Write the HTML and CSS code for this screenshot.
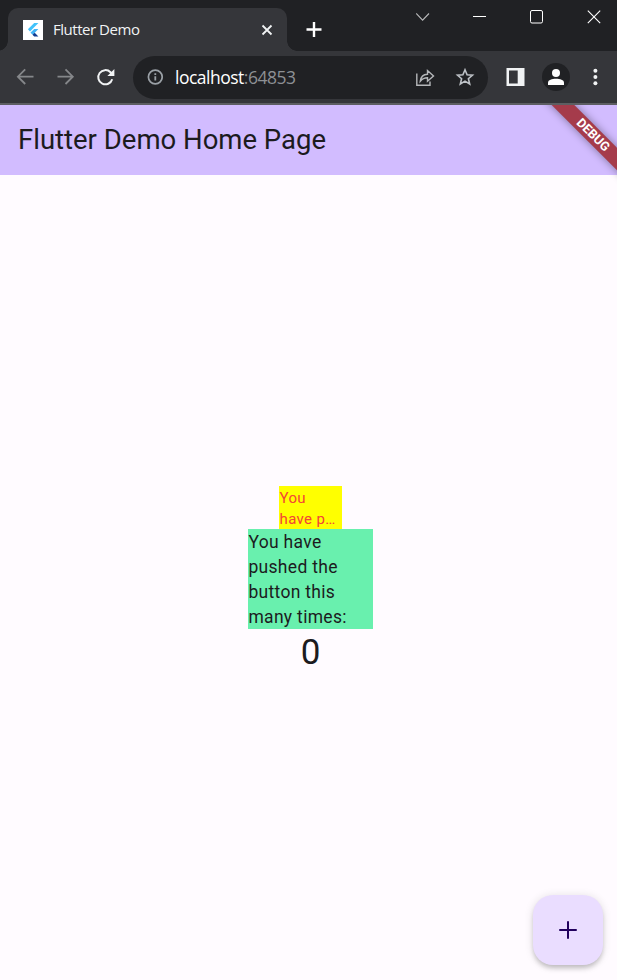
FILE: index.html
```html
<!DOCTYPE html>
<html lang="en">
<head>
<meta charset="utf-8">
<title>Flutter Demo</title>
<link rel="stylesheet" href="styles.css">
</head>
<body>
<div class="window">
  <header class="tabstrip">
    <div class="tab">
      <span class="favicon"><svg width="20" height="20" viewBox="0 0 20 20"><path d="M11.2 3h4.2L7 11.4 4.9 9.2z" fill="#42c3fb"/><path d="M11.2 9h4.2l-5.6 5.8-2.4-2z" fill="#42b4f5"/><path d="M9.5 14.8l2.2-2.1 3.7 3.8h-4.2z" fill="#123c91"/></svg></span>
      <span class="tab-title">Flutter Demo</span>
      <svg class="tab-close" width="12" height="12" viewBox="0 0 12 12"><path d="M1.5 1.5l9 9M10.5 1.5l-9 9" stroke="#f1f3f4" stroke-width="1.8"/></svg>
    </div>
    <svg class="new-tab" width="16" height="16" viewBox="0 0 16 16"><path d="M8 1v15M.5 8.5h15" stroke="#fff" stroke-width="2.4"/></svg>
    <div class="controls">
      <svg width="14" height="14" viewBox="0 0 14 14"><path d="M.2 3.5l6.4 6.7L13 3.5" fill="none" stroke="#b8b9ba" stroke-width="1.1"/></svg>
      <svg width="14" height="14" viewBox="0 0 14 14"><path d="M0 6.5h13" stroke="#fff"/></svg>
      <svg width="14" height="14" viewBox="0 0 14 14"><rect x=".5" y=".5" width="12" height="12.5" rx="1.5" fill="none" stroke="#fff"/></svg>
      <svg width="14" height="14" viewBox="0 0 14 14"><path d="M.8.7l12.4 12.4M13.2.7L.8 13.1" stroke="#fff" stroke-width="1.1"/></svg>
    </div>
  </header>
  <nav class="toolbar">
    <svg class="nav" width="20" height="20" viewBox="0 0 20 20"><path d="M18.5 9.7H3.2M10.2 2.4L2.9 9.7l7.3 7.3" fill="none" stroke="#85878a" stroke-width="1.8"/></svg>
    <svg class="nav" width="20" height="20" viewBox="0 0 20 20"><path d="M2.5 9.7h15M10.5 2.4l7.3 7.3-7.3 7.3" fill="none" stroke="#85878a" stroke-width="1.8"/></svg>
    <svg class="nav" width="20" height="20" viewBox="0 0 20 20"><path d="M17.2 12.2A7.1 7.1 0 1 1 15.5 5.3l1.5 1.5" fill="none" stroke="#f1f3f4" stroke-width="2"/><path d="M19.4 2v7h-7z" fill="#f1f3f4"/></svg>
    <div class="address">
      <svg width="16" height="16" viewBox="0 0 16 16"><circle cx="8.3" cy="8" r="6.9" fill="none" stroke="#9aa0a6" stroke-width="1.7"/><path d="M8.3 7.2v4.4M8.3 4.2v1.7" stroke="#9aa0a6" stroke-width="1.8"/></svg>
      <span class="url">localhost<span class="port">:64853</span></span>
      <svg class="share" width="20" height="20" viewBox="0 0 20 20"><path d="M1.8 6.5v11.7H15v-3.6M5.3 14.2c.5-4.5 3.2-6.7 7.2-6.9V3.6L18.5 9l-6 5.2v-3.5c-3 0-5.2.9-7.2 3.5z" fill="none" stroke="#b5b7ba" stroke-width="1.4"/></svg>
      <svg class="star" width="20" height="20" viewBox="0 0 20 20"><path d="M10 2.7l2.1 5 5.4.5-4.1 3.5 1.3 5.3-4.7-2.9L5.3 17l1.3-5.3-4.1-3.5 5.4-.5z" fill="none" stroke="#bdc1c6" stroke-width="1.6"/></svg>
    </div>
    <svg class="panel" width="19" height="18" viewBox="0 0 19 18"><path fill-rule="evenodd" d="M.5 0h18v18H.5zM3 2.6v12.8h8.7V2.6z" fill="#f1f3f4"/></svg>
    <span class="avatar"><svg width="16" height="16" viewBox="0 0 16 16"><circle cx="8" cy="4" r="4" fill="#fff"/><path d="M0 16v-2.4C0 10.8 4 9.7 8 9.7s8 1.1 8 3.9V16z" fill="#fff"/></svg></span>
    <svg class="menu" width="6" height="18" viewBox="0 0 6 18"><g fill="#f1f3f4"><circle cx="3.4" cy="2.7" r="2"/><circle cx="3.4" cy="9" r="2"/><circle cx="3.4" cy="15.3" r="2"/></g></svg>
  </nav>
  <div class="app">
    <div class="appbar"><h1>Flutter Demo Home Page</h1></div>
    <div class="banner">DEBUG</div>
    <main class="content">
      <p class="small">You<br>have p…</p>
      <p class="message">You have pushed the button this many times:</p>
      <p class="count">0</p>
    </main>
    <button class="fab" aria-label="Increment"><svg width="30" height="30" viewBox="0 0 24 24"><path d="M19 12.8h-6.2V19h-1.6v-6.2H5v-1.6h6.2V5h1.6v6.2H19z" fill="#21005d"/></svg></button>
  </div>
</div>
</body>
</html>
```
FILE: styles.css
```css
* { box-sizing: border-box; }
html, body { height: 100%; }
body { margin: 0; background: #fffbff; }
h1, p { margin: 0; }
svg { display: block; flex: none; }
.window { width: 617px; height: 980px; overflow: hidden; display: flex; flex-direction: column; font-family: "Open Sans", sans-serif; }
.tabstrip { height: 51px; flex: none; display: flex; background: #202124; padding-left: 8px; }
.tab { position: relative; width: 279px; height: 43px; margin-top: 8px; border-radius: 10px 10px 0 0; background: #35363a; display: flex; align-items: center; padding: 0 14px 0 15px; }
.tab::before, .tab::after { content: ""; position: absolute; bottom: 0; width: 10px; height: 10px; }
.tab::before { left: -10px; background: radial-gradient(circle at 0 0, transparent 9.5px, #35363a 10px); }
.tab::after { right: -10px; background: radial-gradient(circle at 100% 0, transparent 9.5px, #35363a 10px); }
.favicon { width: 20px; height: 20px; background: #fff; }
.tab-title { margin: -2px 0 0 10px; font-size: 15px; line-height: 20px; letter-spacing: -0.47px; color: #f1f3f4; white-space: nowrap; }
.tab-close { margin-left: auto; }
.new-tab { margin: 21px 0 0 19px; }
.controls { display: flex; gap: 43px; margin: 10px 0 0 94px; }
.toolbar { height: 54px; flex: none; display: flex; align-items: center; background: #35363a; border-bottom: 2px solid #5d5e62; padding-left: 15px; }
.nav { margin-right: 20px; }
.nav + .nav + .nav { margin-right: 18px; }
.address { width: 355px; height: 43px; border-radius: 22px; background: #202124; display: flex; align-items: center; padding-left: 14px; }
.url { margin-left: 12px; font-size: 17.5px; line-height: 24px; letter-spacing: -0.5px; color: #fff; white-space: nowrap; }
.port { color: #8d9094; }
.share { margin-left: auto; }
.star { margin: 0 13px 0 20px; }
.panel { margin-left: 18px; }
.avatar { width: 28px; height: 28px; margin-left: 17px; border-radius: 50%; background: #202124; display: flex; align-items: center; justify-content: center; }
.menu { margin-left: 22px; }
.app { position: relative; flex: 1; width: 621px; display: flex; flex-direction: column; overflow: hidden; font-family: Roboto, sans-serif; color: #1c1b1e; background: #fffbff; }
.appbar { height: 70px; flex: none; display: flex; align-items: center; padding: 0 0 2px 18px; background: #d2bcff; }
h1 { font-size: 27.5px; font-weight: 400; line-height: 35px; white-space: nowrap; }
.banner { position: absolute; left: 528px; top: 22px; width: 130px; height: 16px; transform: rotate(45deg); background: #a53b4b; box-shadow: 0 0 8px rgba(0,0,0,.4); color: #fff; font-size: 12.75px; font-weight: 700; line-height: 16px; text-align: center; }
.content { flex: 1; display: flex; flex-direction: column; align-items: center; padding-top: 311px; }
.small { width: 63px; height: 43px; padding: 2px 0 0 .5px; background: #ff0; color: #f44336; font-size: 15px; line-height: 21.4px; letter-spacing: .38px; white-space: nowrap; }
.message { width: 125px; height: 100px; padding: 1px 0 0 .4px; background: #69f0ae; font-size: 17.5px; line-height: 25px; letter-spacing: .3125px; }
.count { padding-top: 1px; font-size: 35px; line-height: 45px; }
.fab { position: absolute; left: 533px; top: 790px; width: 70px; height: 70px; border: 0; border-radius: 20px; padding: 0; background: #eaddff; display: flex; align-items: center; justify-content: center; box-shadow: 0 4px 5px -1px rgba(0,0,0,.2), 0 1px 10px rgba(0,0,0,.12); }
```
